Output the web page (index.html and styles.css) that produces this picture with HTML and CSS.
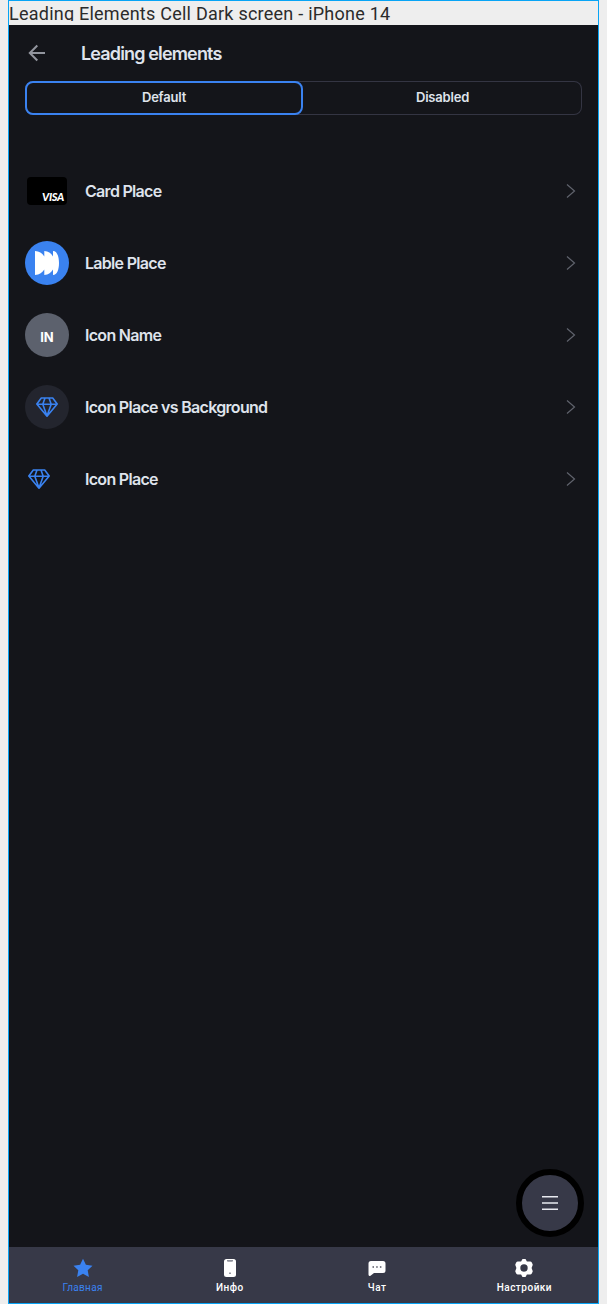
FILE: index.html
```html
<!DOCTYPE html>
<html lang="ru">
<head>
<meta charset="utf-8">
<title>Leading elements</title>
<link rel="stylesheet" href="styles.css">
</head>
<body>
<div class="frame">
  <div class="caption"><span>Leading Elements Cell Dark screen - iPhone 14</span></div>
  <main class="screen">
    <header class="topbar">
      <svg class="back" width="18" height="18" viewBox="0 0 18 18"><path d="M17 9H2M9.300 1.500L1.800 9l7.500 7.500"/></svg>
      <h1 class="title">Leading elements</h1>
    </header>
    <div class="tabs">
      <div class="tab tab-active">Default</div>
      <div class="tab">Disabled</div>
    </div>
    <ul class="list">
      <li class="row">
        <span class="lead"><span class="card"><span class="visa">VISA</span></span></span>
        <span class="label">Card Place</span>
        <svg class="chevron" width="10" height="16" viewBox="0 0 10 16"><path d="M1 1.500L8.500 8 1 14.500"/></svg>
      </li>
      <li class="row">
        <span class="lead"><svg width="44" height="44" viewBox="0 0 44 44"><circle cx="22" cy="22" r="22" fill="#3a82f0"/><path fill="#fff" d="M10 10c4.500.4 7.500 2.500 9.300 5.500V10c4.300.4 7 2.500 8.700 5.500V10c4 0 6 5.500 6 12s-2 12-6 12v-5.500c-1.700 3-4.400 5.100-8.700 5.500v-5.500c-1.800 3-4.800 5.100-9.300 5.500z"/></svg></span>
        <span class="label">Lable Place</span>
        <svg class="chevron" width="10" height="16" viewBox="0 0 10 16"><path d="M1 1.500L8.500 8 1 14.500"/></svg>
      </li>
      <li class="row">
        <span class="lead"><span class="avatar avatar-name">IN</span></span>
        <span class="label">Icon Name</span>
        <svg class="chevron" width="10" height="16" viewBox="0 0 10 16"><path d="M1 1.500L8.500 8 1 14.500"/></svg>
      </li>
      <li class="row">
        <span class="lead"><span class="avatar avatar-icon"><svg class="gem" width="24" height="22" viewBox="0 0 24 22"><path d="M6.300 2h11.400L22.200 8 12 20.200 1.800 8zM2 8.200h20M10 2L7.800 8.200 12 20l4.200-11.800L14 2"/></svg></span></span>
        <span class="label">Icon Place vs Background</span>
        <svg class="chevron" width="10" height="16" viewBox="0 0 10 16"><path d="M1 1.500L8.500 8 1 14.500"/></svg>
      </li>
      <li class="row">
        <span class="lead lead-plain"><svg class="gem" width="24" height="22" viewBox="0 0 24 22"><path d="M6.300 2h11.400L22.200 8 12 20.200 1.800 8zM2 8.200h20M10 2L7.800 8.200 12 20l4.200-11.800L14 2"/></svg></span>
        <span class="label">Icon Place</span>
        <svg class="chevron" width="10" height="16" viewBox="0 0 10 16"><path d="M1 1.500L8.500 8 1 14.500"/></svg>
      </li>
    </ul>
    <div class="fab"><svg width="18" height="16" viewBox="0 0 18 16"><path d="M1 1.750h16M1 8h16M1 14.250h16"/></svg></div>
  </main>
  <nav class="nav">
    <div class="nav-item nav-active">
      <svg width="20" height="20" viewBox="0 0 20 20"><path d="M10 .8l2.900 6 6.600.9-4.800 4.600 1.200 6.600L10 15.700l-5.900 3.200 1.200-6.600L.5 7.700l6.600-.9z"/></svg>
      <span>Главная</span>
    </div>
    <div class="nav-item">
      <svg width="20" height="20" viewBox="0 0 20 20"><rect x="4" y="1" width="12" height="18" rx="2.500"/><path fill="#8e909a" d="M7 2h6v.8q0 1-1 1H8q-1 0-1-1zM9.100 14.600h1.800v1.500H9.100z"/></svg>
      <span>Инфо</span>
    </div>
    <div class="nav-item">
      <svg width="20" height="20" viewBox="0 0 20 20"><path d="M4 3h12q2.500 0 2.500 2.500v7q0 2.500-2.500 2.500H7l-3.500 2.700Q1.500 18.500 1.500 16.500v-11Q1.500 3 4 3z"/><path fill="#555764" d="M5.500 8.200h1.500v1.500H5.500zM9.200 8.200h1.500v1.500H9.200zM12.900 8.200h1.500v1.500h-1.500z"/></svg>
      <span>Чат</span>
    </div>
    <div class="nav-item">
      <svg width="20" height="20" viewBox="0 0 20 20"><path fill-rule="evenodd" d="M8.500 1h3l1.400 2.500h3.300q1 0 1.600 1.100l.8 1.600q.3.800-.2 1.500L17.600 10l.8 2.300q.5.800.2 1.500l-.8 1.600q-.6 1.100-1.600 1.100h-3.300L11.500 19h-3l-1.400-2.500H3.800q-1 0-1.600-1.100l-.8-1.600q-.3-.7.200-1.500L2.400 10l-.8-2.300q-.5-.7-.2-1.500l.8-1.600q.6-1.100 1.600-1.100h3.300zM10 6.300a3.700 3.700 0 100 7.400 3.700 3.700 0 000-7.400z"/></svg>
      <span>Настройки</span>
    </div>
  </nav>
</div>
</body>
</html>
```
FILE: styles.css
```css
* { box-sizing: border-box; }
body { margin: 0; padding: 0 8px; background: #eeeeee; font-family: Inter, "Noto Sans", sans-serif; }
.frame { width: 591px; height: 1304px; border: 1px solid #08a4f5; display: flex; flex-direction: column; }
.caption { height: 24px; color: #2b2b2b; font: 18px/26px Roboto, sans-serif; letter-spacing: .24px; white-space: nowrap; }
.caption span { display: block; height: 20px; overflow: hidden; }
.screen { flex: 1; position: relative; padding: 0 16px; background: #14151a; color: #dfe3ec; }
.topbar { height: 56px; display: flex; align-items: center; padding-left: 3px; gap: 35px; }
.back { fill: none; stroke: #92959e; stroke-width: 2; }
.title { margin: 0; font-size: 18px; font-weight: 600; letter-spacing: -.85px; }
.tabs { display: grid; grid-template-columns: 278px 1fr; height: 34px; border-radius: 8px; box-shadow: inset 0 0 0 1px #343543; }
.tab { text-align: center; font-size: 13px; font-weight: 600; line-height: 32px; letter-spacing: -.2px; border-radius: 8px; }
.tab-active { border: 2px solid #3a82f0; line-height: 28px; }
.list { list-style: none; margin: 40px 0 0; padding: 0; }
.row { height: 72px; display: flex; align-items: center; }
.lead { width: 44px; display: flex; justify-content: center; margin-right: 16px; }
.lead-plain { justify-content: flex-start; padding-left: 2px; }
.label { flex: 1; font-size: 16px; font-weight: 600; letter-spacing: -.7px; }
.chevron { margin-right: 6px; fill: none; stroke: #60636d; stroke-width: 1.2; }
.card { width: 40px; height: 28px; padding: 0 3px 2px 0; border-radius: 4px; background: #000; color: #fff; display: flex; align-items: flex-end; justify-content: flex-end; }
.visa { font: italic 900 11px/13px Lato, sans-serif; letter-spacing: -.3px; }
.avatar { width: 44px; height: 44px; border-radius: 50%; display: flex; align-items: center; justify-content: center; }
.avatar-name { background: #5c616d; color: #fff; padding-top: 4px; font-size: 13px; font-weight: 700; }
.avatar-icon { background: #23252e; }
.gem { fill: none; stroke: #3a82f0; stroke-width: 1.6; stroke-linejoin: round; }
.fab { position: absolute; right: 14px; bottom: 10px; width: 68px; height: 68px; border: 6px solid #000; border-radius: 50%; background: #373948; display: flex; align-items: center; justify-content: center; }
.fab svg { stroke: #e8eaf0; stroke-width: 1.7; }
.nav { height: 56px; display: flex; background: #373948; color: #fff; }
.nav-item { flex: 1; display: flex; flex-direction: column; align-items: center; padding-top: 11px; font: 500 10px/14px Roboto, sans-serif; letter-spacing: .5px; }
.nav-item svg { fill: currentColor; margin-bottom: 3px; }
.nav-active { color: #3a82f0; font-weight: 400; letter-spacing: .3px; }
```
